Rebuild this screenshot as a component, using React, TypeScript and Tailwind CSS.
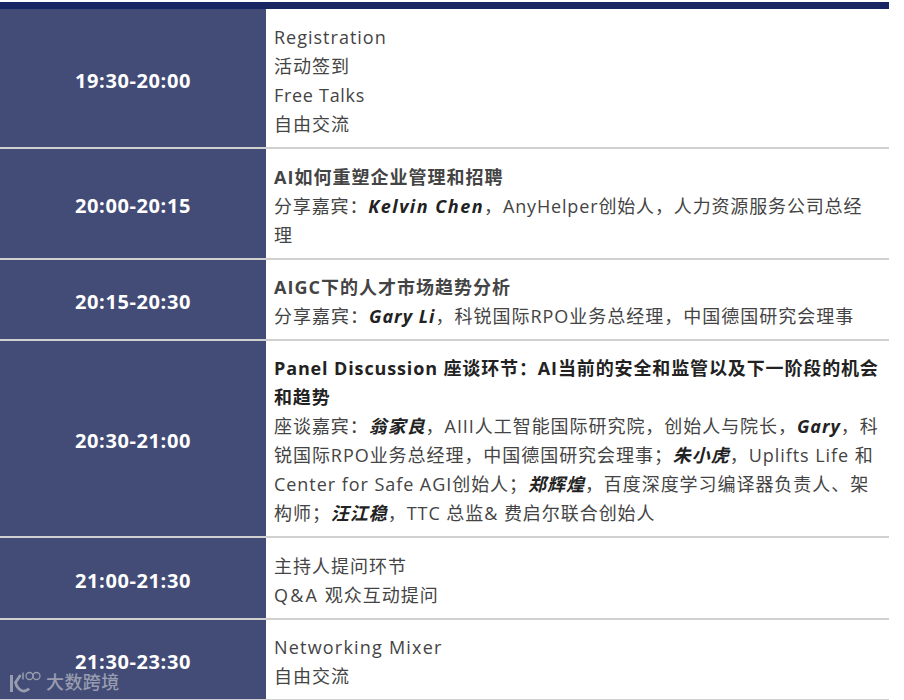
import * as React from "react";

type Row = { time: string; height: string; body: React.ReactNode };

const B = ({ children }: { children: React.ReactNode }) => (
  <strong className="font-bold italic text-[#222]">{children}</strong>
);
const T = ({ children }: { children: React.ReactNode }) => (
  <div className="font-bold">{children}</div>
);

const rows: Row[] = [
  {
    time: "19:30-20:00",
    height: "h-[138px]",
    body: (
      <>
        <div>Registration</div>
        <div>活动签到</div>
        <div className="tracking-[0.7px]">Free Talks</div>
        <div>自由交流</div>
      </>
    ),
  },
  {
    time: "20:00-20:15",
    height: "h-[109px]",
    body: (
      <>
        <T>AI如何重塑企业管理和招聘</T>
        <div className="tracking-[0.85px]">
          分享嘉宾：
          <span className="tracking-[1.5px]">
            <B>Kelvin Chen</B>
          </span>
          ，AnyHelper创始人，人力资源服务公司总经理
        </div>
      </>
    ),
  },
  {
    time: "20:15-20:30",
    height: "h-[79px]",
    body: (
      <>
        <T>AIGC下的人才市场趋势分析</T>
        <div>
          分享嘉宾：<B>Gary Li</B>，科锐国际RPO业务总经理，中国德国研究会理事
        </div>
      </>
    ),
  },
  {
    time: "20:30-21:00",
    height: "h-[195px]",
    body: (
      <>
        <div className="font-bold tracking-[0.87px] text-[#222]">
          Panel Discussion 座谈环节：AI当前的安全和监管以及下一阶段的机会和趋势
        </div>
        <div className="tracking-[0.95px]">
          座谈嘉宾：<B>翁家良</B>，AIII人工智能国际研究院，创始人与院长，<B>Gary</B>
          ，科锐国际RPO业务总经理，中国德国研究会理事；<B>朱小虎</B>，Uplifts Life 和 Center for Safe
          AGI创始人；<B>郑辉煌</B>，百度深度学习编译器负责人、架构师；<B>汪江稳</B>，TTC 总监&amp;
          费启尔联合创始人
        </div>
      </>
    ),
  },
  {
    time: "21:00-21:30",
    height: "h-[80px]",
    body: (
      <>
        <div>主持人提问环节</div>
        <div>
          <span className="tracking-[2.2px]">Q&amp;A</span> 观众互动提问
        </div>
      </>
    ),
  },
  {
    time: "21:30-23:30",
    height: "h-[79px]",
    body: (
      <>
        <div className="tracking-[1.2px]">Networking Mixer</div>
        <div>自由交流</div>
      </>
    ),
  },
];

export default function App() {
  return (
    <div
      className="relative h-[700px] w-[904px] overflow-hidden bg-white pt-[2px]"
      style={{ fontFamily: '"Open Sans", "Noto Sans CJK SC", sans-serif' }}
    >
      <div className="w-[889px]">
        <div className="h-[7px] bg-[#172663]" />
        {rows.map((row) => (
          <div key={row.time} className={`flex border-b-2 border-[#d0d0d0] last:border-b ${row.height} box-content`}>
            <div className="flex w-[266px] shrink-0 items-center justify-center bg-[#434c76] pt-[5px] text-[20px] font-bold tracking-[0.6px] text-white">
              {row.time}
            </div>
            <div className="flex flex-1 flex-col justify-center pl-2 pr-2 pt-[5px] text-[18px] leading-[29px] tracking-[1px] text-[#444]">
              {row.body}
            </div>
          </div>
        ))}
      </div>

      {/* watermark */}
      <div className="absolute left-[9px] top-[671px] flex items-center gap-[5px] opacity-75">
        <svg width="32" height="22" viewBox="0 0 32 22" fill="none" stroke="#b4b7c2">
          <path d="M2.5 4v17" strokeWidth="3" />
          <path d="M11.5 4 6.5 11.5c1 5 5 9 9 8.5 2-.2 3.5-1 4.5-2.5" strokeWidth="2.8" />
          <path d="M14 1.5v7" strokeWidth="1.5" />
          <circle cx="20.5" cy="5" r="3.5" strokeWidth="1.3" />
          <circle cx="27.5" cy="5" r="3.5" strokeWidth="1.3" />
        </svg>
        <span className="text-[18px] font-medium leading-none tracking-[0.4px] text-[#b4b7c2]">大数跨境</span>
      </div>
    </div>
  );
}
